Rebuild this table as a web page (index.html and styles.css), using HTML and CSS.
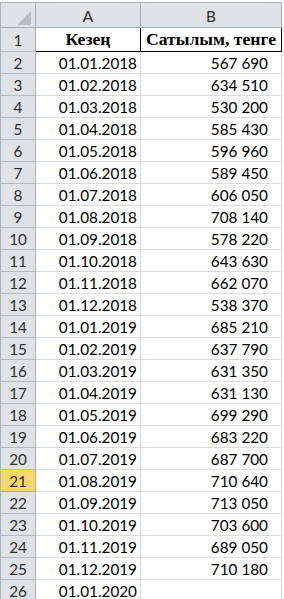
FILE: index.html
```html
<!DOCTYPE html>
<html>
<head>
<meta charset="utf-8">
<link rel="stylesheet" href="styles.css">
</head>
<body>
<div class="top"></div>
<div class="sheet">
  <div class="corner"><span class="tri"></span></div>
  <div class="colhead">A</div>
  <div class="colhead">B</div>

  <div class="rowhead r1">1</div>
  <div class="cell title a r1">Кезең</div>
  <div class="cell title b r1">Сатылым, тенге</div>

  <div class="rowhead">2</div><div class="cell a">01.01.2018</div><div class="cell b">567 690</div>
  <div class="rowhead">3</div><div class="cell a">01.02.2018</div><div class="cell b">634 510</div>
  <div class="rowhead">4</div><div class="cell a">01.03.2018</div><div class="cell b">530 200</div>
  <div class="rowhead">5</div><div class="cell a">01.04.2018</div><div class="cell b">585 430</div>
  <div class="rowhead">6</div><div class="cell a">01.05.2018</div><div class="cell b">596 960</div>
  <div class="rowhead">7</div><div class="cell a">01.06.2018</div><div class="cell b">589 450</div>
  <div class="rowhead">8</div><div class="cell a">01.07.2018</div><div class="cell b">606 050</div>
  <div class="rowhead">9</div><div class="cell a">01.08.2018</div><div class="cell b">708 140</div>
  <div class="rowhead">10</div><div class="cell a">01.09.2018</div><div class="cell b">578 220</div>
  <div class="rowhead">11</div><div class="cell a">01.10.2018</div><div class="cell b">643 630</div>
  <div class="rowhead">12</div><div class="cell a">01.11.2018</div><div class="cell b">662 070</div>
  <div class="rowhead">13</div><div class="cell a">01.12.2018</div><div class="cell b">538 370</div>
  <div class="rowhead">14</div><div class="cell a">01.01.2019</div><div class="cell b">685 210</div>
  <div class="rowhead">15</div><div class="cell a">01.02.2019</div><div class="cell b">637 790</div>
  <div class="rowhead">16</div><div class="cell a">01.03.2019</div><div class="cell b">631 350</div>
  <div class="rowhead">17</div><div class="cell a">01.04.2019</div><div class="cell b">631 130</div>
  <div class="rowhead">18</div><div class="cell a">01.05.2019</div><div class="cell b">699 290</div>
  <div class="rowhead">19</div><div class="cell a">01.06.2019</div><div class="cell b">683 220</div>
  <div class="rowhead">20</div><div class="cell a">01.07.2019</div><div class="cell b">687 700</div>
  <div class="rowhead active">21</div><div class="cell a">01.08.2019</div><div class="cell b">710 640</div>
  <div class="rowhead">22</div><div class="cell a">01.09.2019</div><div class="cell b">713 050</div>
  <div class="rowhead">23</div><div class="cell a">01.10.2019</div><div class="cell b">703 600</div>
  <div class="rowhead">24</div><div class="cell a">01.11.2019</div><div class="cell b">689 050</div>
  <div class="rowhead">25</div><div class="cell a">01.12.2019</div><div class="cell b">710 180</div>
  <div class="rowhead">26</div><div class="cell a">01.01.2020</div><div class="cell b"></div>
</div>
</body>
</html>
```
FILE: styles.css
```css
html, body {
  margin: 0;
  padding: 0;
  overflow: hidden;
  background: #ffffff;
}

.top {
  height: 2px;
  width: 282px;
  border-bottom: 1px solid #a9b3c0;
  background: #ffffff;
}

.sheet {
  display: grid;
  grid-template-columns: 36px 105px 141px;
  grid-template-rows: 25px 24px;
  grid-auto-rows: 22px;
  font-family: Lato, "Open Sans", sans-serif;
  font-size: 15.3px;
  color: #000000;
}

.sheet > div {
  box-sizing: border-box;
  display: flex;
  align-items: center;
}

.corner {
  position: relative;
  background: #dfe3e8;
  border-left: 1px solid #a9b3c0;
  border-right: 1px solid #a9aeb5;
  border-bottom: 1px solid #a9aeb5;
}

.tri {
  position: absolute;
  left: 16px;
  top: 8px;
  width: 0;
  height: 0;
  border-left: 14px solid transparent;
  border-bottom: 14px solid #b8bdc4;
}

.colhead {
  justify-content: center;
  background: #dfe3e8;
  border-right: 1px solid #a9aeb5;
  border-bottom: 1px solid #a9aeb5;
  color: #2e2e2e;
  padding-top: 1px;
}

.rowhead {
  justify-content: center;
  background: #dfe3e8;
  border-left: 1px solid #a9b3c0;
  border-right: 1px solid #a9aeb5;
  border-bottom: 1px solid #b4b9c0;
  color: #2e2e2e;
}

.rowhead.active {
  background: #f8d66c;
  border-bottom-color: #c9ad5a;
}

.cell {
  justify-content: flex-end;
  border-right: 1px solid #d9dbdd;
  border-bottom: 1px solid #d9dbdd;
  white-space: nowrap;
}

.cell.a {
  padding-right: 3px;
}

.cell.b {
  padding-right: 13px;
}

.cell.title {
  justify-content: center;
  padding: 0;
  font-family: "Liberation Serif", "Times New Roman", serif;
  font-weight: bold;
  font-size: 17.6px;
  border-right: 1px solid #000000;
  border-bottom: 1px solid #000000;
}
```
